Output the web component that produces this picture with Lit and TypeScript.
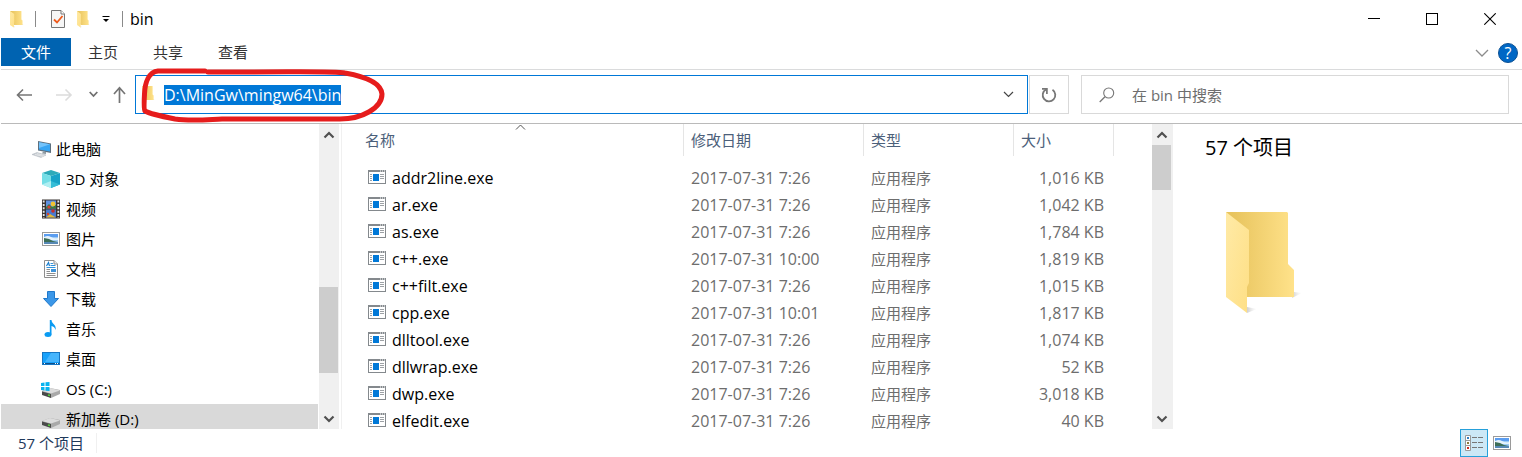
import { LitElement, html, css, svg } from "lit";
import { customElement, property, query } from "lit/decorators.js";
import { classMap } from "lit/directives/class-map.js";
import { styleMap } from "lit/directives/style-map.js";

const folderIcon = (w: number, h: number) => html`
  <svg width=${w} height=${h} viewBox="0 0 76 104" preserveAspectRatio="none" aria-hidden="true">
    <defs>
      <linearGradient id="back" x1="0" y1="0" x2="1" y2="0">
        <stop offset="0.1" stop-color="#e8c45e" /><stop offset="1" stop-color="#ffe28a" />
      </linearGradient>
      <linearGradient id="front" x1="0" y1="0" x2="1" y2="1">
        <stop offset="0" stop-color="#ffeaa6" /><stop offset="1" stop-color="#fedf85" />
      </linearGradient>
      <linearGradient id="shade" x1="0" y1="0" x2="1" y2="0">
        <stop offset="0" stop-color="#bbb" stop-opacity="0.7" /><stop offset="1" stop-color="#ddd" stop-opacity="0" />
      </linearGradient>
    </defs>
    <path d="M66 86 L76 81 L68 80Z" fill="url(#shade)" />
    <path d="M21 101 L31 97 L21 95Z" fill="url(#shade)" />
    <path d="M0 0 H61 L62 1 V52 L68 58 V85 H21Z" fill="url(#back)" />
    <path d="M0 0 L23 18 V71 L21 75 V101 L0 85Z" fill="url(#front)" />
  </svg>`;

const landscape = svg`
  <rect x="0.5" y="0.5" width="17" height="13" fill="#fff" stroke="#9a9a9a" />
  <rect x="2" y="2" width="14" height="10" fill="#9ccbf5" />
  <rect x="2" y="2" width="14" height="3" fill="#5b9df0" />
  <path d="M2 5 Q6 3 9 5 T16 6 V8 H2Z" fill="#e5f2fc" />
  <path d="M2 6 L7 7 L11 9 L16 10 V11 H2Z" fill="#3d6e57" />
  <path d="M2 10 H16 V12 H2Z" fill="#5688b5" />`;

const drive = svg`
  <path d="M1 11 L9 8 L19 10 L19 14 L10 18 L1 14Z" fill="#a9a9a9" />
  <path d="M1 11 L9 8 L19 10.5 L10 13.5Z" fill="#dcdcdc" />
  <path d="M1 11.5 L10 14 V18 L1 15Z" fill="#4a4a4a" />
  <path d="M7 15 L9 15.5" stroke="#55d63c" stroke-width="1.5" />`;

const treeIcons: Record<string, unknown> = {
  pc: svg`
    <path d="M7 2 L20 4.5 V14 L7 11.5Z" fill="#5d6f7e" />
    <path d="M8 3.2 L19 5.3 V12.6 L8 10.5Z" fill="#37a5f3" />
    <path d="M8 3.2 L19 5.3 L8 9Z" fill="#74c3fa" />
    <path d="M12 12.5 L15 13 V15 L11 14.5Z" fill="#8f9aa2" />
    <path d="M1 15.5 L6 13.5 L15 16 L10 18.5Z" fill="#c9ced3" stroke="#a9b1b8" stroke-width="0.5" />
    <path d="M4 15.5 L12 17.3 M6 14.6 L13.5 16.5" stroke="#f4f4f4" stroke-width="0.6" />`,
  cube: svg`
    <path d="M10 1 L19 4 L10 7 L1 4Z" fill="#2cabb9" />
    <path d="M1 4 L10 7 V19 L1 15.5Z" fill="#74dee6" />
    <path d="M19 4 L10 7 V19 L19 15.5Z" fill="#17a3c7" />
    <path d="M1 15.5 L10 12 L10 19Z" fill="#b0eff2" />
    <path d="M10 12 L19 15.5 L10 19Z" fill="#35bdd6" />`,
  video: svg`
    <rect x="1" y="0.5" width="18" height="19" fill="#3a3432" />
    <rect x="5" y="1.5" width="10" height="8" fill="#5f8fe0" /><rect x="5" y="10.5" width="10" height="8" fill="#4a7bd0" />
    <path d="M5 8 L8 5 L11 8 L15 6 V9.5 H5Z" fill="#3f7d3c" /><circle cx="12" cy="5" r="2.4" fill="#f1c433" /><circle cx="8" cy="8" r="1.6" fill="#d83b35" />
    <circle cx="12" cy="12" r="1.8" fill="#c92f2a" /><path d="M5 18.5 L9 15 L15 18.5Z" fill="#e3b83a" /><circle cx="7" cy="15" r="1.2" fill="#d8432c" />
    <path d="M2.7 1.5 V19 M17.3 1.5 V19" stroke="#e8e8e8" stroke-width="1.8" stroke-dasharray="2 1.4" />`,
  picture: svg`<g transform="translate(1 3)">${landscape}</g>`,
  doc: svg`
    <path d="M3.5 1.5 H13 L16.5 5 V18.5 H3.5Z" fill="#fff" stroke="#8e8e8e" />
    <path d="M13 1.5 V5 H16.5" fill="#eee" stroke="#8e8e8e" />
    <path d="M5.5 7 L7.5 3.5 L8.5 7" fill="none" stroke="#1a7fd0" stroke-width="1.2" />
    <path d="M9.5 4.5 H12 M9.5 6.5 H14.5 M5.5 8.5 H14.5" stroke="#2f92dc" />
    <path d="M5.5 10.5 H9 M5.5 12.5 H9 M5.5 14.5 H14.5 M5.5 16.5 H14.5" stroke="#8e8e8e" />
    <rect x="10" y="10" width="5" height="3" fill="#3f93d8" />`,
  download: svg`<path d="M6.5 2.5 H13.5 V9.5 H17.5 L10 17.5 L2.5 9.5 H6.5Z" fill="#3b97e8" stroke="#1f78cb" />`,
  music: svg`
    <ellipse cx="7" cy="15.5" rx="3.5" ry="2.5" fill="#0a9bf2" />
    <path d="M8.8 1 H10.5 C10.5 5 16 5.5 14.5 11 C14 8.5 12.5 7.5 10.5 7 V15.5 H8.8Z" fill="#0a9bf2" />`,
  desktop: svg`
    <rect x="1.5" y="3.5" width="17" height="12" fill="#18a2fb" stroke="#1676c4" />
    <path d="M10 4 H18 V13 H4Z" fill="#46b5fd" />
    <path d="M2 14.5 H18" stroke="#0e4f88" /><path d="M3 14.5 H4 M14 14.5 H15 M16 14.5 H17" stroke="#fff" />`,
  os: svg`<g transform="translate(0 1)">${drive}</g>
    <path d="M0 4 L3.5 3.5 V7 H0Z M4.5 3.3 L8.5 3 V7 H4.5Z M0 8 H3.5 V11.5 L0 11Z M4.5 8 H8.5 V12 L4.5 11.7Z" fill="#08b3ef" />`,
  drive: svg`<g transform="translate(0 1)">${drive}</g>`,
};

const appIcon = html`
  <svg width="18" height="14" viewBox="0 0 18 14" aria-hidden="true">
    <rect x="0.5" y="0.5" width="17" height="13" fill="#fff" stroke="#84898d" />
    <path d="M0 1 H18" stroke="#84898d" stroke-width="2" />
    <path d="M12 1 H13 M14 1 H15 M16 1 H17" stroke="#fff" />
    <rect x="5" y="4" width="6" height="7" fill="#0078d7" />
    <path d="M2 4.5 H4 M2 6.5 H4 M2 8.5 H4 M2 10.5 H4 M12 4.5 H16 M12 6.5 H16 M12 8.5 H16" stroke="#9da1a5" />
  </svg>`;

@customElement("scroll-rail")
export class ScrollRail extends LitElement {
  @property({ type: Number }) before = 0;
  @property({ type: Number }) size = 1;
  @property({ type: Number }) after = 1;

  static styles = css`
    :host { display: flex; flex-direction: column; width: 20px; background: #f0f0f0; }
    button { flex: none; display: grid; place-items: center; height: 21px; border: 0; padding: 0; background: none; }
    .track { flex: 1; display: flex; flex-direction: column; }
    .thumb { background: #cdcdcd; margin-right: 1px; }
    path { fill: none; stroke: #505050; stroke-width: 2.2; }
  `;

  render() {
    return html`
      <button aria-label="向上滚动"><svg width="12" height="8" viewBox="0 0 12 8"><path d="M1.5 6.5 L6 2 L10.5 6.5" /></svg></button>
      <div class="track">
        <div style=${styleMap({ flexGrow: String(this.before) })}></div>
        <div class="thumb" style=${styleMap({ flexGrow: String(this.size) })}></div>
        <div style=${styleMap({ flexGrow: String(this.after) })}></div>
      </div>
      <button aria-label="向下滚动"><svg width="12" height="8" viewBox="0 0 12 8"><path d="M1.5 1.5 L6 6 L10.5 1.5" /></svg></button>
    `;
  }
}

interface TreeItem { icon: string; label: string; root?: boolean; selected?: boolean }
interface FileRow { name: string; date: string; size: string }

const tree: TreeItem[] = [
  { icon: "pc", label: "此电脑", root: true },
  { icon: "cube", label: "3D 对象" },
  { icon: "video", label: "视频" },
  { icon: "picture", label: "图片" },
  { icon: "doc", label: "文档" },
  { icon: "download", label: "下载" },
  { icon: "music", label: "音乐" },
  { icon: "desktop", label: "桌面" },
  { icon: "os", label: "OS (C:)" },
  { icon: "drive", label: "新加卷 (D:)", selected: true },
];

const files: FileRow[] = [
  { name: "addr2line.exe", date: "2017-07-31 7:26", size: "1,016 KB" },
  { name: "ar.exe", date: "2017-07-31 7:26", size: "1,042 KB" },
  { name: "as.exe", date: "2017-07-31 7:26", size: "1,784 KB" },
  { name: "c++.exe", date: "2017-07-31 10:00", size: "1,819 KB" },
  { name: "c++filt.exe", date: "2017-07-31 7:26", size: "1,015 KB" },
  { name: "cpp.exe", date: "2017-07-31 10:01", size: "1,817 KB" },
  { name: "dlltool.exe", date: "2017-07-31 7:26", size: "1,074 KB" },
  { name: "dllwrap.exe", date: "2017-07-31 7:26", size: "52 KB" },
  { name: "dwp.exe", date: "2017-07-31 7:26", size: "3,018 KB" },
  { name: "elfedit.exe", date: "2017-07-31 7:26", size: "40 KB" },
];

@customElement("app-root")
export class AppRoot extends LitElement {
  @query(".path") pathInput!: HTMLInputElement;

  static styles = css`
    :host {
      display: grid;
      grid-template-rows: 38px 32px 54px 1fr 28px;
      height: 100vh;
      overflow: hidden;
      position: relative;
      box-sizing: border-box;
      padding-left: 1px;
      background: #fff;
      color: #000;
      font: 15px/20px "Open Sans", "Noto Sans CJK SC", sans-serif;
    }
    * { box-sizing: border-box; }
    button, input { font: inherit; color: inherit; border: 0; padding: 0; margin: 0; background: none; outline: none; border-radius: 0; }
    button { display: grid; place-items: center; }
    svg { display: block; flex: none; }
    a { color: inherit; text-decoration: none; }

    .title { display: flex; align-items: center; padding-left: 9px; }
    .title .rule { width: 1px; height: 16px; background: #8a8a8a; }
    .quick { display: flex; align-items: center; gap: 12px; padding: 0 12px 0 15px; }
    .lead { padding-right: 11px; }
    .caption { flex: 1; padding-left: 7px; font-size: 16px; font-weight: 400; margin: 0; }
    .window { display: flex; padding-right: 3px; }
    .window button { width: 58px; height: 38px; }

    .ribbon { display: flex; align-items: flex-start; border-bottom: 1px solid #dadbdc; }
    .ribbon .tab { height: 28px; padding: 0 17px; margin-right: 1px; color: #333; }
    .ribbon .tab.file { padding: 0 20px; margin: 0; background: #0063b1; color: #fff; }
    .ribbon .spacer { flex: 1; }
    .ribbon .fold { width: 22px; height: 30px; }
    .help { width: 20px; height: 20px; margin: 5px 4px 0 5px; border-radius: 50%; background: #0067c5; border: 1px solid #0d5194; color: #fff; font-size: 16px; line-height: 18px; }

    .bar { display: flex; align-items: center; padding: 0 13px 4px 15px; border-bottom: 1px solid #bababa; }
    .history { display: flex; align-items: center; gap: 15px; padding-right: 9px; }
    .address { flex: 872; display: flex; align-items: center; height: 39px; border: 1px solid #0078d7; padding: 0 13px 0 6px; }
    .path { flex: 1; min-width: 0; height: 20px; line-height: 20px; padding-left: 9px; font-size: 16px; }
    .path::selection { background: #0078d7; color: #fff; }
    .refresh { width: 40px; height: 39px; border: 1px solid #d9d9d9; margin: 0 12px 0 1px; }
    .search { flex: 409; display: flex; align-items: center; gap: 17px; height: 39px; border: 1px solid #d9d9d9; padding-left: 17px; }
    .search input { flex: 1; min-width: 0; height: 24px; }
    .search input::placeholder { color: #6d6d6d; opacity: 1; }

    .body { display: grid; grid-template-columns: 317px 21px 834px 1fr; min-height: 0; }
    .tree { overflow: hidden; list-style: none; margin: 0; padding: 10px 0 0; min-height: 0; }
    .tree a { display: flex; align-items: center; gap: 5px; height: 30px; padding-left: 40px; }
    .tree .root { padding-left: 30px; }
    .tree .selected { background: #d9d9d9; }
    .siderail { padding-left: 1px; display: flex; }
    .files { display: flex; min-height: 0; margin-left: 2px; border-left: 1px solid #f0f0f0; border-right: 1px solid #f0f0f0; }
    .listing { flex: 1; min-width: 0; overflow: hidden; }
    table { table-layout: fixed; border-collapse: collapse; width: 100%; }
    th, td { padding: 0; text-align: left; font-weight: 400; }
    thead tr { height: 40px; vertical-align: top; }
    th div { height: 32px; line-height: 32px; padding-left: 7px; border-right: 1px solid #e5e5e5; color: #4c607a; position: relative; }
    th .first { padding-left: 23px; }
    .sort { position: absolute; left: 173px; top: 0; }
    tbody tr { height: 27px; }
    td { padding-left: 7px; color: #6d6d6d; white-space: nowrap; }
    td:first-child { padding-left: 26px; color: #000; }
    td a { display: flex; align-items: center; gap: 6px; }
    td svg { margin-bottom: 2px; }
    .latin { font-size: 16px; }
    .num { text-align: right; padding-right: 10px; }
    .c-name { width: 342px; } .c-date { width: 180px; } .c-type { width: 150px; } .c-size { width: 100px; }

    .preview { padding: 10px 0 0 32px; }
    .preview h2 { margin: 0; font-size: 20px; line-height: 28px; font-weight: 400; }
    .preview svg { margin: 50px 0 0 21px; }

    .status { display: flex; align-items: center; padding: 0 6px 0 17px; color: #1e395b; }
    .count { padding-right: 12px; margin-right: auto; border-right: 1px solid #f0f0f0; }
    .view { width: 28px; height: 28px; }
    .view.on { background: #cce8f6; border: 1px solid #26a0da; }

    .ring { position: absolute; left: 136px; top: 62px; pointer-events: none; }
  `;

  firstUpdated() {
    this.pathInput.focus();
    this.pathInput.select();
  }

  render() {
    return html`
      <header class="title">
        <span class="lead">${folderIcon(14, 17)}</span>
        <span class="rule"></span>
        <span class="quick">
          <button aria-label="属性">
            <svg width="14" height="18" viewBox="0 0 14 18">
              <path d="M0.5 0.5 H10 L13.5 4 V17.5 H0.5Z" fill="#f6f6f6" stroke="#777" />
              <path d="M10 0.5 V4 H13.5" fill="#fff" stroke="#777" />
              <path d="M3 9.5 L6 12.5 L11.5 6" fill="none" stroke="#ee5a1c" stroke-width="1.8" />
            </svg>
          </button>
          <button aria-label="新建文件夹">${folderIcon(13, 17)}</button>
          <button aria-label="自定义快速访问工具栏">
            <svg width="8" height="8" viewBox="0 0 8 8"><path d="M0.5 1.5 H7.5" stroke="#000" /><path d="M1 4 H7 L4 7Z" /></svg>
          </button>
        </span>
        <span class="rule"></span>
        <h1 class="caption">bin</h1>
        <div class="window">
          <button aria-label="最小化"><svg width="12" height="12" viewBox="0 0 12 12"><path d="M0 5.5 H12" stroke="#000" /></svg></button>
          <button aria-label="最大化"><svg width="12" height="12" viewBox="0 0 12 12"><rect x="0.5" y="0.5" width="11" height="11" fill="none" stroke="#000" /></svg></button>
          <button aria-label="关闭"><svg width="12" height="12" viewBox="0 0 12 12"><path d="M0.3 0.3 L11.7 11.7 M11.7 0.3 L0.3 11.7" stroke="#000" stroke-width="1.1" /></svg></button>
        </div>
      </header>

      <nav class="ribbon">
        <button class="tab file">文件</button>
        <button class="tab">主页</button>
        <button class="tab">共享</button>
        <button class="tab">查看</button>
        <span class="spacer"></span>
        <button class="fold" aria-label="展开功能区"><svg width="14" height="8" viewBox="0 0 14 8"><path d="M1 1 L7 7 L13 1" fill="none" stroke="#8c8c8c" stroke-width="1.3" /></svg></button>
        <button class="help" aria-label="帮助">?</button>
      </nav>

      <div class="bar">
        <div class="history">
          <button aria-label="后退"><svg width="17" height="14" viewBox="0 0 17 14"><path d="M16 7 H2 M7 1.5 L1.5 7 L7 12.5" fill="none" stroke="#757575" stroke-width="1.6" /></svg></button>
          <button aria-label="前进"><svg width="26" height="14" viewBox="0 0 26 14"><path d="M8 7 H23 M17.5 1.5 L23 7 L17.5 12.5" fill="none" stroke="#dcdcdc" stroke-width="1.6" /></svg></button>
          <button aria-label="最近浏览的位置"><svg width="9" height="7" viewBox="0 0 9 7"><path d="M0.7 1 L4.5 5 L8.3 1" fill="none" stroke="#707070" stroke-width="1.8" /></svg></button>
          <button aria-label="上移"><svg width="13" height="17" viewBox="0 0 13 17"><path d="M6.5 17 V2 M1 8 L6.5 1.8 L12 8" fill="none" stroke="#757575" stroke-width="1.7" /></svg></button>
        </div>
        <div class="address">
          ${folderIcon(13, 17)}
          <input class="path" aria-label="地址" spellcheck="false" .value=${"D:\\MinGw\\mingw64\\bin"} />
          <button aria-label="以前的位置"><svg width="11" height="7" viewBox="0 0 11 7"><path d="M1 1 L5.5 5.5 L10 1" fill="none" stroke="#444" stroke-width="1.2" /></svg></button>
        </div>
        <button class="refresh" aria-label="刷新">
          <svg width="16" height="16" viewBox="0 0 16 16"><path d="M11.5 2.8 A6.3 6.3 0 1 1 5 2.5" fill="none" stroke="#777" stroke-width="1.8" /><path d="M1 1.9 H5.9 V7" fill="none" stroke="#777" stroke-width="1.7" /></svg>
        </button>
        <div class="search">
          <svg width="16" height="16" viewBox="0 0 16 16"><circle cx="9.7" cy="6" r="5" fill="none" stroke="#777" stroke-width="1.1" /><path d="M6 9.7 L0.7 15" stroke="#777" stroke-width="1.3" /></svg>
          <input aria-label="搜索" placeholder="在 bin 中搜索" />
        </div>
      </div>

      <div class="body">
        <ul class="tree">
          ${tree.map(
            (t) => html`<li><a href="#" class=${classMap({ root: !!t.root, selected: !!t.selected })}>
              <svg width="20" height="20" viewBox="0 0 20 20" aria-hidden="true">${treeIcons[t.icon]}</svg>${t.label}</a></li>`
          )}
        </ul>
        <div class="siderail"><scroll-rail .before=${142} .size=${86} .after=${35}></scroll-rail></div>
        <main class="files">
          <div class="listing">
            <table>
              <colgroup><col class="c-name" /><col class="c-date" /><col class="c-type" /><col class="c-size" /><col /></colgroup>
              <thead>
                <tr>
                  <th><div class="first">名称
                    <svg class="sort" width="11" height="6" viewBox="0 0 11 6"><path d="M1 5.5 L5.5 1 L10 5.5" fill="none" stroke="#555" /></svg>
                  </div></th>
                  <th><div>修改日期</div></th>
                  <th><div>类型</div></th>
                  <th><div>大小</div></th>
                  <th></th>
                </tr>
              </thead>
              <tbody>
                ${files.map(
                  (f) => html`<tr>
                    <td><a href="#">${appIcon}<span class="latin">${f.name}</span></a></td>
                    <td class="latin">${f.date}</td>
                    <td>应用程序</td>
                    <td class="latin num">${f.size}</td>
                    <td></td>
                  </tr>`
                )}
              </tbody>
            </table>
          </div>
          <scroll-rail .before=${0} .size=${45} .after=${218}></scroll-rail>
        </main>
        <aside class="preview">
          <h2>57 个项目</h2>
          ${folderIcon(76, 104)}
        </aside>
      </div>

      <footer class="status">
        <span class="count">57 个项目</span>
        <button class="view on" aria-label="详细信息">
          <svg width="18" height="16" viewBox="0 0 18 16">
            <path d="M0.5 0.5 H5.5 V15.5 H0.5Z M0.5 5.5 H5.5 M0.5 10.5 H5.5" fill="#fff" stroke="#999" />
            <path d="M2 2 H4 V4 H2Z" fill="#2f7fc2" /><path d="M2 7 H4 V9 H2Z" fill="#8a7a3a" /><path d="M2 12 H4 V14 H2Z" fill="#d02a1e" />
            <path d="M7 2.5 H12 M13 2.5 H18 M7 7.5 H12 M13 7.5 H18 M7 12.5 H12 M13 12.5 H18" stroke="#777" />
          </svg>
        </button>
        <button class="view" aria-label="大图标"><svg width="18" height="14" viewBox="0 0 18 14">${landscape}</svg></button>
      </footer>

      <svg class="ring" width="260" height="64" viewBox="136 62 260 64" fill="none" stroke="#e61c1c" stroke-width="5" stroke-linecap="round" stroke-linejoin="round" aria-hidden="true">
        <path d="M205 71 H158 C149 72 145 82 144.5 94 C144 103 144 110 145 111 C150 114 160 116 175 119 C190 121 200 120 222 119 H340 C362 119 382 108 382 94 C381 82 362 76 345 73 C335 71 320 72 208 72" />
      </svg>
    `;
  }
}
